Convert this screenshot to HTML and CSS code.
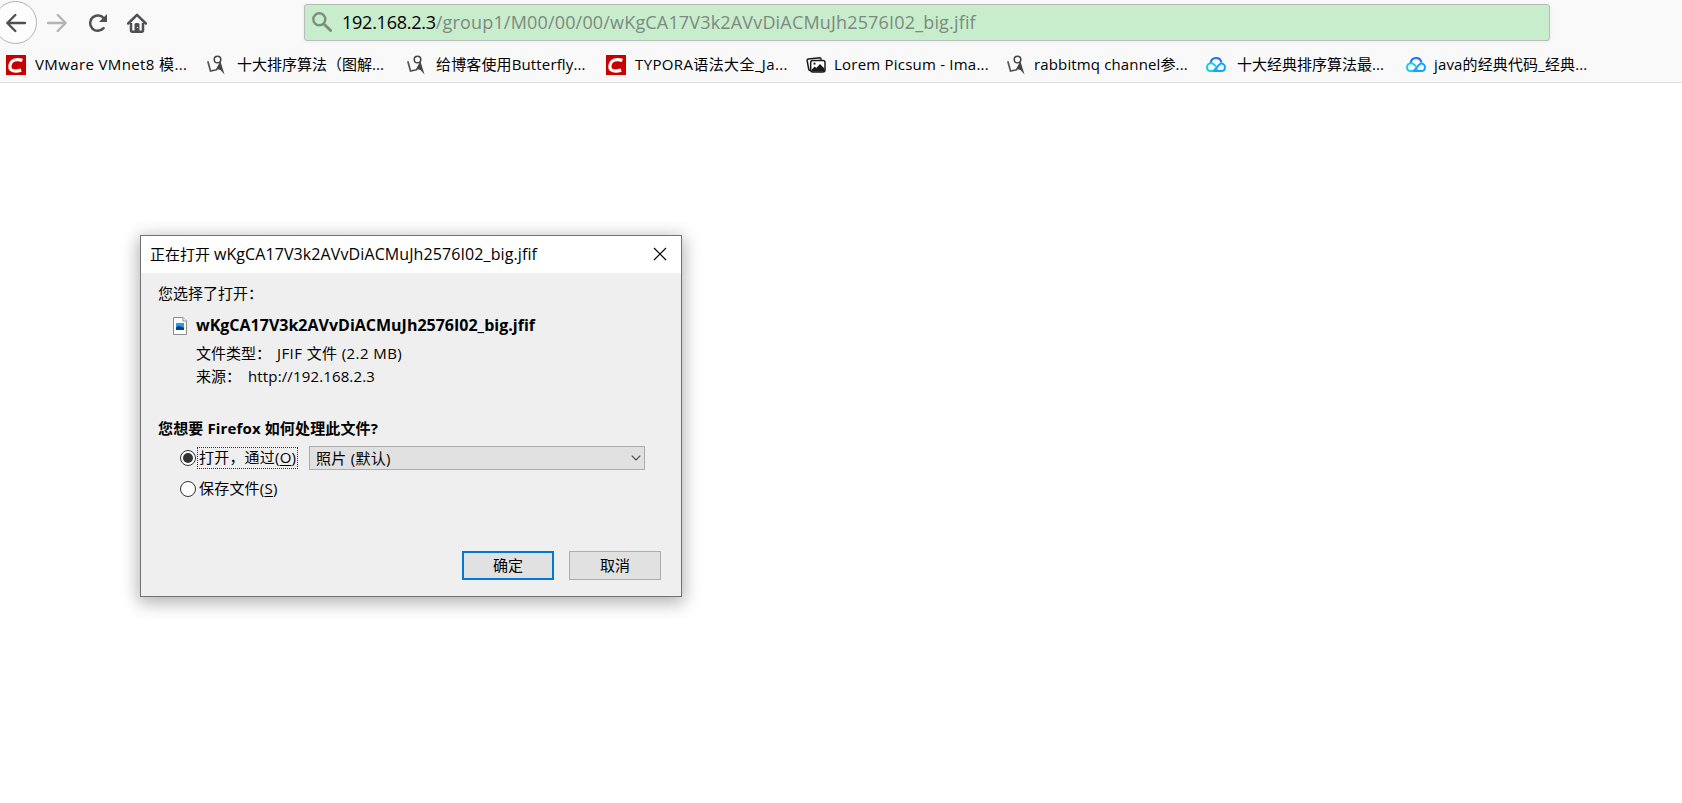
FILE: index.html
```
<!DOCTYPE html>
<html lang="zh-CN">
<head>
<meta charset="utf-8">
<title>wKgCA17V3k2AVvDiACMuJh2576I02_big.jfif</title>
<link rel="stylesheet" href="styles.css">
</head>
<body>
<svg class="defs" aria-hidden="true">
  <symbol id="csdn" viewBox="0 0 20 20">
    <rect width="20" height="20" fill="#c90000"/>
    <path d="M16.400 5.400C13 4.400 9 4.200 6.500 6C3.600 8.200 3 12.800 5.100 14.700C7.200 16.300 11.800 16.200 15.200 15.200" fill="none" stroke="#fff" stroke-width="3.300"/>
  </symbol>
  <symbol id="figure" viewBox="0 0 20 20">
    <circle cx="11.500" cy="4.500" r="3.300" fill="none" stroke="#444" stroke-width="1.500"/>
    <path d="M1.800 6.200L4.500 16L10.500 14.800L14.300 8" fill="none" stroke="#555" stroke-width="1.700"/>
    <path d="M14 4.500L16 11.500L18.500 19.500L14.500 15L10.500 14L13.600 9Z" fill="#444"/>
  </symbol>
  <symbol id="photos" viewBox="0 0 20 20">
    <path d="M4.500 15.500L3.500 15.200Q2.900 15 2.700 14L1.100 5.500Q1 4.200 2.200 3.900L13.800 2.800Q15 2.800 15.300 4.800" fill="none" stroke="#1b1b1b" stroke-width="1.500"/>
    <rect x="4.700" y="5.400" width="14.300" height="11.500" rx="2" fill="#fff" stroke="#1b1b1b" stroke-width="1.500"/>
    <path d="M5.500 15L8.500 11.500L10.300 13L14 9L18.500 13.500V16.500H5.500Z" fill="#1b1b1b"/>
    <circle cx="8.500" cy="8.700" r="1.100" fill="#1b1b1b"/>
  </symbol>
  <symbol id="cloud" viewBox="0 0 20 20">
    <path d="M4.600 8.200C5 4.800 7.300 3 10 3C12.800 3 14.900 4.800 15.400 7.600" fill="none" stroke="#1677f5" stroke-width="2"/>
    <path d="M11.500 13.500L9.300 15.600Q8.600 16.100 7.500 16.100H5C2.500 16.100 1 14.300 1 12.200C1 10 2.700 8.300 5 8.300C6.500 8.300 7.500 8.900 8.500 9.900L10 11.400" fill="none" stroke="#12cfe5" stroke-width="2"/>
    <path d="M7.500 16.100L13.200 9.700C15.500 7.200 19 9 19 12.200C19 14.500 17.300 16.100 15 16.100H7.500" fill="none" stroke="#14a5fb" stroke-width="2"/>
  </symbol>
</svg>

<header class="chrome">
  <div class="navbar">
    <button class="back" aria-label="后退"><svg width="20" height="20" viewBox="0 0 20 20"><path d="M19 10H1.500M9.300 2L1.300 10L9.300 18" fill="none" stroke="#505052" stroke-width="2.400" stroke-linecap="round" stroke-linejoin="round"/></svg></button>
    <svg class="forward" width="20" height="20" viewBox="0 0 20 20"><path d="M1 10H18.500M10.700 2L18.700 10L10.700 18" fill="none" stroke="#b4b4b5" stroke-width="2.300" stroke-linecap="round" stroke-linejoin="round"/></svg>
    <svg class="reload" width="20" height="20" viewBox="0 0 20 20"><path d="M15.600 15.200A7.700 7.700 0 1 1 16 5.500" fill="none" stroke="#505052" stroke-width="2.500" stroke-linecap="round"/><path d="M19 1V9H11Z" fill="#505052"/></svg>
    <svg class="home" width="20" height="20" viewBox="0 0 20 20"><path d="M1.200 10.500L10 1.800L18.800 10.500" fill="none" stroke="#505052" stroke-width="2.500" stroke-linecap="round" stroke-linejoin="round"/><path d="M4 10V17.300Q4 18.700 5.400 18.700H14.600Q16 18.700 16 17.300V10" fill="none" stroke="#505052" stroke-width="2.500"/><path d="M7.500 18V11.500Q7.500 10 9 10H11Q12.500 10 12.500 11.500V18Z" fill="#505052"/><path d="M9.800 14.500H11.300" stroke="#ddd"/></svg>
    <div class="urlbar">
      <svg width="20" height="20" viewBox="0 0 20 20"><circle cx="7.300" cy="7.300" r="6" fill="none" stroke="#7b8f7e" stroke-width="2.400"/><path d="M11.900 11.900L18.600 18.600" stroke="#7b8f7e" stroke-width="2.800" stroke-linecap="round"/></svg>
      <span class="url"><span class="host">192.168.2.3</span><span class="path">/group1/M00/00/00/wKgCA17V3k2AVvDiACMuJh2576I02_big.jfif</span></span>
    </div>
  </div>
  <nav class="bookmarks">
    <a class="bm"><svg><use href="#csdn"/></svg><span class="wide">VMware VMnet8 模...</span></a>
    <a class="bm inset"><svg><use href="#figure"/></svg><span>十大排序算法（图解...</span></a>
    <a class="bm roomy"><svg><use href="#figure"/></svg><span class="snug">给博客使用Butterfly...</span></a>
    <a class="bm"><svg><use href="#csdn"/></svg><span class="wide">TYPORA语法大全_Ja...</span></a>
    <a class="bm tight"><svg><use href="#photos"/></svg><span class="medium">Lorem Picsum - Ima...</span></a>
    <a class="bm tight"><svg><use href="#figure"/></svg><span class="snug">rabbitmq channel参...</span></a>
    <a class="bm inset"><svg><use href="#cloud"/></svg><span>十大经典排序算法最...</span></a>
    <a class="bm tight"><svg><use href="#cloud"/></svg><span class="snug">java的经典代码_经典...</span></a>
  </nav>
</header>

<main class="dialog" role="dialog">
  <div class="titlebar">
    <span class="caption">正在打开 <span class="caption-name">wKgCA17V3k2AVvDiACMuJh2576I02_big.jfif</span></span>
    <svg width="14" height="14" viewBox="0 0 14 14"><path d="M1 1L13 13M13 1L1 13" stroke="#000" stroke-width="1.150"/></svg>
  </div>
  <div class="body">
    <div class="intro">您选择了打开：</div>
    <div class="file">
      <svg width="14" height="18" viewBox="0 0 14 18"><path d="M.5.5H10L13.500 4V17.500H.5Z" fill="#fbfbfb" stroke="#8c8c8c"/><path d="M10 .5V4H13.500" fill="#fff" stroke="#8c8c8c"/><rect x="3" y="6" width="8" height="7" fill="#2f9be8"/><path d="M3 10.500L6 8.500L8 10L9 9.500L11 11V13H3Z" fill="#0c3f7c"/></svg>
      <span>wKgCA17V3k2AVvDiACMuJh2576I02_big.jfif</span>
    </div>
    <div class="meta"><span class="key">文件类型：</span><span class="kind">JFIF 文件 (2.2 MB)</span></div>
    <div class="meta"><span class="key short">来源：</span><span class="source">http://192.168.2.3</span></div>
    <div class="question">您想要 Firefox 如何处理此文件?</div>
    <div class="choice open">
      <i class="radio on"></i><span class="label focus">打开，通过(<u>O</u>)</span>
      <div class="select"><span>照片 (默认)</span><svg width="10" height="6" viewBox="0 0 10 6"><path d="M.7.7L5 5L9.300.7" fill="none" stroke="#444" stroke-width="1.100"/></svg></div>
    </div>
    <div class="choice save"><i class="radio"></i><span class="label">保存文件(<u>S</u>)</span></div>
    <div class="actions"><button class="btn primary">确定</button><button class="btn">取消</button></div>
  </div>
</main>
</body>
</html>
```
FILE: styles.css
```
* { box-sizing: border-box; }
body {
  margin: 0;
  height: 803px;
  overflow: hidden;
  position: relative;
  background: #fff;
  color: #000;
  font: 15px/20px "Open Sans", "Noto Sans CJK SC", sans-serif;
  font-variant-ligatures: none;
  white-space: nowrap;
}
button { font: inherit; color: inherit; padding: 0; }
svg { flex: none; display: block; }
.defs { position: absolute; width: 0; height: 0; }

.chrome { height: 83px; background: #f9f9fa; border-bottom: 1px solid #dedee0; }
.navbar { display: flex; align-items: center; height: 45px; }
.back {
  display: flex; align-items: center; justify-content: center;
  width: 43px; height: 43px; margin-left: -6px;
  border: 1px solid #b0b0b1; border-radius: 50%; background: #fdfdfd;
}
.forward { margin-left: 10px; }
.reload { margin-left: 21px; }
.home { margin-left: 19px; }
.urlbar {
  display: flex; align-items: center;
  width: 1246px; height: 37px; margin-left: 157px; padding-left: 7px;
  background: #c8edcc; border: 1px solid #b9bdb9; border-radius: 3px;
  box-shadow: 0 1px 4px rgba(0, 0, 0, .06);
}
.urlbar svg { margin-bottom: 2px; }
.url { margin-left: 10px; padding-bottom: 2px; font-size: 18px; line-height: 26px; }
.host { letter-spacing: -.25px; }
.path { color: #7d8a7f; letter-spacing: .17px; }

.bookmarks { display: flex; height: 37px; padding: 2px 0 0 6px; }
.bm { display: flex; align-items: center; width: 200px; height: 36px; gap: 9px; }
.bm svg { width: 20px; height: 20px; }
.bm span { padding-bottom: 2px; }
.bm.inset { gap: 11px; }
.bm.roomy { gap: 10px; }
.bm.tight { gap: 8px; }
.wide { letter-spacing: .38px; }
.medium { letter-spacing: .22px; }
.snug { letter-spacing: .14px; }

.dialog {
  position: absolute; left: 140px; top: 235px;
  width: 542px; height: 362px;
  background: #efefef; border: 1px solid #727274;
  box-shadow: 0 4px 16px 2px rgba(0, 0, 0, .3);
}
.titlebar {
  display: flex; align-items: center; justify-content: space-between;
  height: 37px; padding: 0 14px 2px 9px; background: #fff;
}
.caption-name { font-size: 16px; letter-spacing: .1px; }
.body { padding: 10px 20px 0 17px; }
.intro { height: 21px; line-height: 21px; }
.file {
  display: flex; align-items: center; gap: 9px;
  height: 22px; margin: 11px 0 5px 15px;
  font-size: 16px; font-weight: 700;
}
.file span { padding-bottom: 2px; }
.meta { display: flex; height: 23px; line-height: 23px; padding-left: 38px; }
.key { width: 81px; }
.key.short { width: 52px; }
.kind { letter-spacing: .41px; }
.source { letter-spacing: .14px; }
.question { height: 22px; line-height: 20px; margin-top: 30px; font-weight: 700; letter-spacing: .14px; }
.choice { display: flex; align-items: center; padding-left: 22px; }
.open { height: 24px; margin-top: 6px; }
.save { height: 22px; margin-top: 8px; }
.radio {
  flex: none; display: flex; align-items: center; justify-content: center;
  width: 16px; height: 16px; border: 1px solid #333; border-radius: 50%; background: #fff;
}
.radio.on::after { content: ""; width: 10px; height: 10px; border-radius: 50%; background: #333; }
.label { margin-left: 1px; padding-left: 1px; height: 22px; line-height: 18px; border: 1px solid transparent; letter-spacing: .2px; }
.focus { width: 101px; border: 1px dotted #333; }
.label u { text-underline-offset: 2px; text-decoration-thickness: 1px; }
.select {
  display: flex; align-items: center; justify-content: space-between;
  width: 336px; height: 24px; margin-left: 11px; padding: 0 3px 0 6px;
  background: #e1e1e1; border: 1px solid #adadad; letter-spacing: .3px;
}
.actions { display: flex; justify-content: flex-end; gap: 15px; margin-top: 51px; }
.btn { width: 92px; height: 29px; padding-bottom: 2px; line-height: 20px; background: #e1e1e1; border: 1px solid #adadad; }
.primary { border: 2px solid #0078d7; }
```
